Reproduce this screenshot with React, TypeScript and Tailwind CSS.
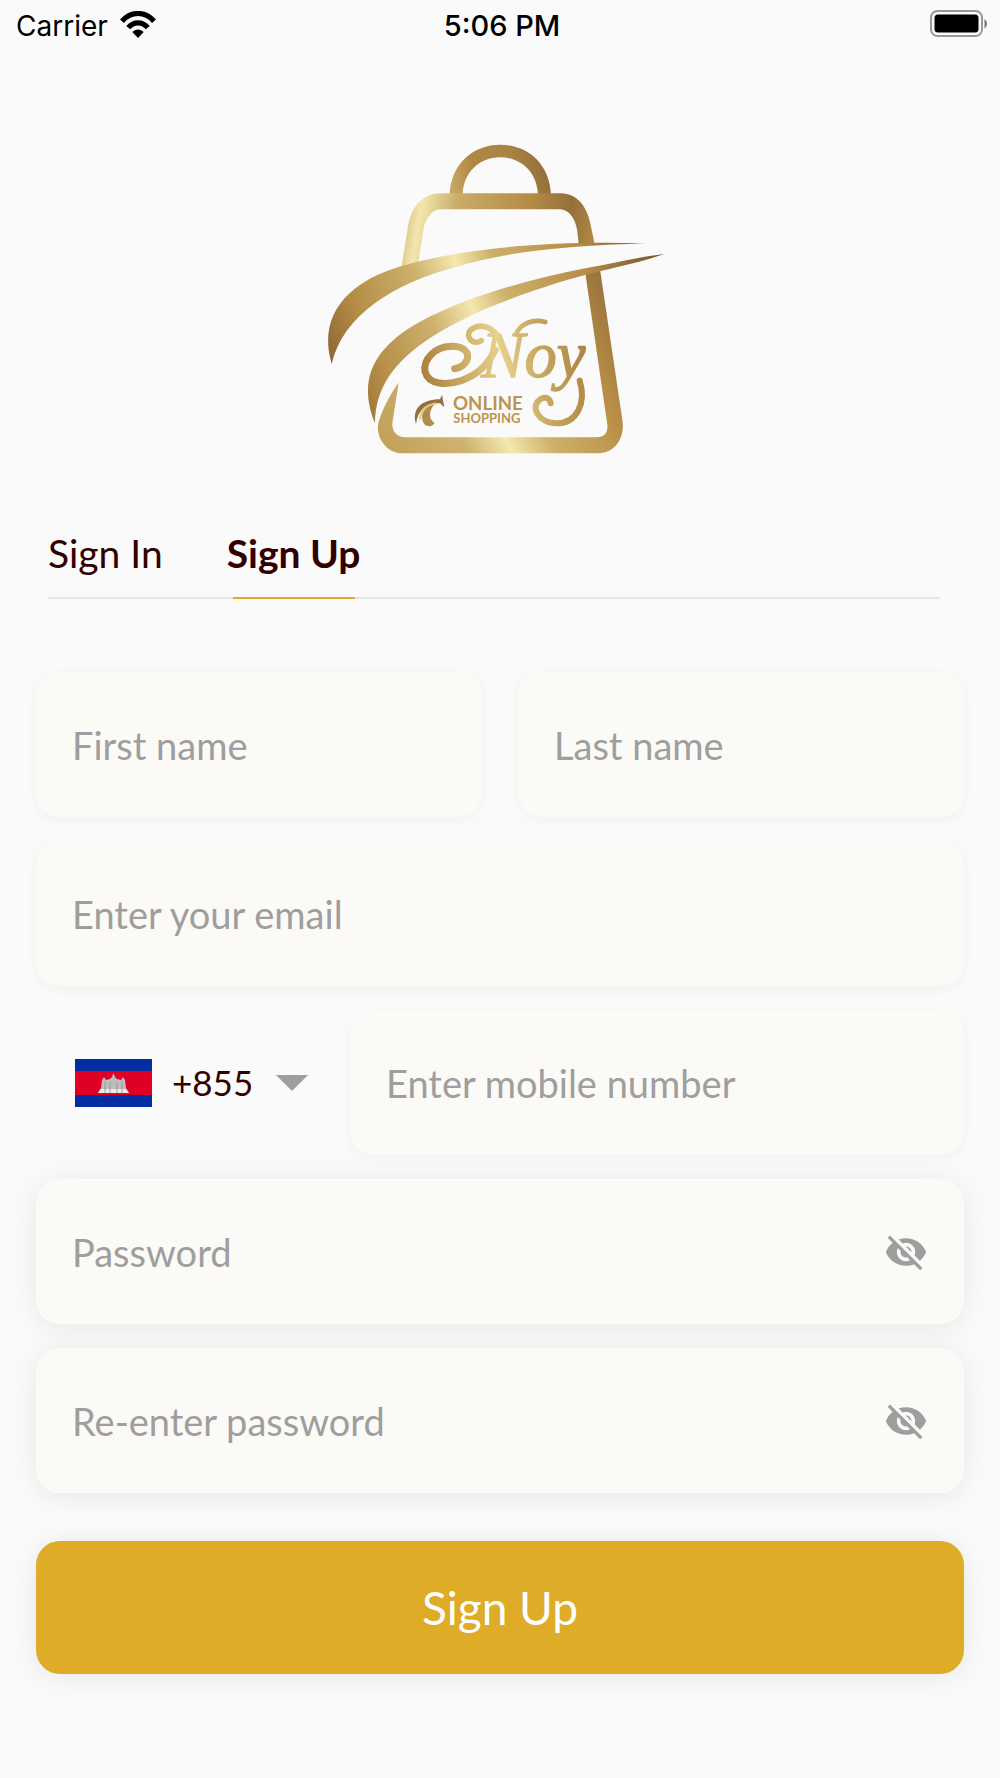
import { useState } from "react";
import { MdVisibility, MdVisibilityOff } from "react-icons/md";

type Tab = "signin" | "signup";

const tabs: { value: Tab; label: string }[] = [
  { value: "signin", label: "Sign In" },
  { value: "signup", label: "Sign Up" },
];

const dialCodes = ["+855", "+66", "+84", "+65"];

function StatusBar() {
  return (
    <header className="grid h-[52px] grid-cols-3 items-center pr-3 pl-4 font-['Inter',sans-serif] text-[28px] text-black">
      <div className="flex items-center gap-3">
        <span>Carrier</span>
        <svg viewBox="0 0 36 27" className="mb-1 h-[27px] w-9" aria-hidden="true">
          <g fill="none" stroke="#000" strokeWidth="5.2">
            <path d="M2 10.2C11-.1 25-.1 34 10.2" />
            <path d="M8.2 16.6c5.5-6.4 14.100-6.400 19.600 0" />
          </g>
          <path d="M12.300 21c3.200-3.400 8.200-3.400 11.400 0L18 27z" />
        </svg>
      </div>
      <span className="text-center text-[29px] font-medium">5:06 PM</span>
      <svg viewBox="0 0 58 28" className="mb-1 h-7 w-[58px] justify-self-end" aria-hidden="true">
        <rect x="1" y="1" width="51" height="25" rx="6.500" fill="none" stroke="#999" strokeWidth="2" />
        <rect x="4.500" y="4.500" width="44" height="18" rx="3.500" />
        <path d="M54.500 9c3.200 2 3.200 7.500 0 9.500z" fill="#777" />
      </svg>
    </header>
  );
}

function Logo() {
  return (
    <svg viewBox="0 0 1110 1020" className="h-[340px] w-[370px]" role="img" aria-label="Noy Online Shopping">
      <defs>
        <linearGradient id="handle" gradientUnits="userSpaceOnUse" x1="420" y1="190" x2="722" y2="90">
          <stop offset="0" stopColor="#c9ab66" />
          <stop offset=".3" stopColor="#b08742" />
          <stop offset=".65" stopColor="#a98447" />
          <stop offset="1" stopColor="#8e6a33" />
        </linearGradient>
        <linearGradient id="bagTop" gradientUnits="userSpaceOnUse" x1="240" y1="300" x2="850" y2="400">
          <stop offset="0" stopColor="#c3a25a" />
          <stop offset=".13" stopColor="#f3e7ae" />
          <stop offset=".3" stopColor="#c9ac68" />
          <stop offset=".65" stopColor="#b58b45" />
          <stop offset=".85" stopColor="#94713a" />
          <stop offset="1" stopColor="#b58c46" />
        </linearGradient>
        <linearGradient id="swoosh" gradientUnits="userSpaceOnUse" x1="50" y1="650" x2="990" y2="310">
          <stop offset="0" stopColor="#8f6a35" />
          <stop offset=".12" stopColor="#b58c46" />
          <stop offset=".32" stopColor="#ccb06c" />
          <stop offset=".45" stopColor="#f4e8b0" />
          <stop offset=".56" stopColor="#cdb06a" />
          <stop offset=".8" stopColor="#b88e48" />
          <stop offset="1" stopColor="#80602f" />
        </linearGradient>
        <linearGradient id="bagBase" gradientUnits="userSpaceOnUse" x1="190" y1="860" x2="920" y2="480">
          <stop offset="0" stopColor="#c3a25a" />
          <stop offset=".25" stopColor="#cfb370" />
          <stop offset=".39" stopColor="#f4e8b0" />
          <stop offset=".53" stopColor="#ceb16b" />
          <stop offset=".78" stopColor="#b98f48" />
          <stop offset="1" stopColor="#94703a" />
        </linearGradient>
        <linearGradient id="script" gradientUnits="userSpaceOnUse" x1="330" y1="740" x2="840" y2="640">
          <stop offset="0" stopColor="#a87d3b" />
          <stop offset=".28" stopColor="#cdb069" />
          <stop offset=".48" stopColor="#e6d28c" />
          <stop offset=".7" stopColor="#c6a660" />
          <stop offset="1" stopColor="#aa803d" />
        </linearGradient>
      </defs>

      <path d="M419 194C423 100 490 44 571 44s148 56 152 150h-39C682 128 634 82 571 82s-111 46-113 112z" fill="url(#handle)" />
      <path
        d="M274 412L294 290C304 228 340 190 392 190H752C806 190 832 238 840 276L854 342H806L802 304C797 266 776 238 750 238H388C366 238 346 270 341 294L325 396Z"
        fill="url(#bagTop)"
      />
      <path
        d="M826 430L870 418L938 876C943 930 912 970 862 970H280C232 970 200 928 204 884C210 854 238 794 266 758L247 880C246 906 262 922 286 922H860C884 922 894 908 892 884Z"
        fill="url(#bagBase)"
      />
      <path
        d="M65 702C20 550 122 452 275 408C460 355 700 332 1005 340C790 348 600 360 430 413C250 462 98 556 65 702Z"
        fill="url(#swoosh)"
      />
      <path
        d="M195 880C140 745 195 650 330 575C490 492 660 448 830 414C920 398 990 380 1063 372C960 408 850 424 740 459C600 505 480 548 365 621C250 695 196 775 195 880Z"
        fill="url(#swoosh)"
      />

      {/* flourishes around the wordmark */}
      <g fill="none" stroke="url(#script)" strokeLinecap="round">
        <path d="M434 716C482 708 492 652 430 649C372 648 340 690 345 724C356 766 410 766 454 752C510 732 534 700 556 660" strokeWidth="21" />
        <path d="M514 632C488 648 464 618 482 600C508 578 546 588 568 626" strokeWidth="17" />
        <path d="M618 612C634 578 670 566 706 576" strokeWidth="14" />
        <path d="M809 752C830 820 800 880 740 880C684 880 656 826 694 806C710 798 720 808 722 820" strokeWidth="18" />
      </g>
      <text
        x="514"
        y="740"
        fill="url(#script)"
        stroke="url(#script)"
        strokeWidth="4"
        className="font-['Liberation_Serif',serif] text-[194px] italic"
      >
        Noy
      </text>

      {/* small emblem left of the tagline */}
      <path d="M318 882C304 836 336 808 390 808L396 794L403 832L390 820C350 818 324 838 318 882Z" fill="#94703a" />
      <path d="M346 886C326 862 338 832 376 820C356 842 354 866 374 880C366 890 356 890 346 886Z" fill="#b38c48" />
      <path d="M330 868C332 838 350 824 380 820" fill="none" stroke="#dcc68a" strokeWidth="6" />
      <g fill="#ba9450" className="font-['Lato',sans-serif]">
        <text x="429" y="840" className="text-[56px] font-bold">
          ONLINE
        </text>
        <text x="430" y="880" className="text-[39px] font-bold">
          SHOPPING
        </text>
      </g>
    </svg>
  );
}

function CambodiaFlag() {
  return (
    <svg viewBox="0 0 77 48" className="h-12 w-[77px] shrink-0" role="img" aria-label="Cambodia">
      <path d="M0 0h77v48H0z" fill="#032ea1" />
      <path d="M0 12h77v24H0z" fill="#e00025" />
      <path
        d="M23 34l3-5 1-8 2-3 2 3 4-1 2-2 1.500-4 1.500 4 2 2 4 1 2-3 2 3 1 8 3 5z"
        fill="#bdbdbd"
      />
      <path d="M23 34l3-4h25l3 4z" fill="#ececec" />
      <path d="M30 22v12M35 23v11M42 23v11M47 22v12" stroke="#8f8f8f" strokeWidth=".8" />
    </svg>
  );
}

interface FieldProps {
  id: string;
  label: string;
  type?: string;
}

function Field({ id, label, type = "text" }: FieldProps) {
  return (
    <input
      id={id}
      type={type}
      aria-label={label}
      placeholder={label}
      className="h-[145px] w-full min-w-0 flex-1 rounded-3xl bg-[#fbfaf6] px-9 text-[38px] text-[#330000] shadow-[0_3px_14px_rgba(0,0,0,0.04)] outline-none placeholder:text-[#9e9e9e]"
    />
  );
}

function PasswordField({ id, label }: FieldProps) {
  const [visible, setVisible] = useState(false);
  const Icon = visible ? MdVisibility : MdVisibilityOff;

  return (
    <div className="flex h-[145px] items-center rounded-3xl bg-[#fbfaf6] pr-9 shadow-[0_3px_28px_rgba(0,0,0,0.08)]">
      <input
        id={id}
        type={visible ? "text" : "password"}
        aria-label={label}
        placeholder={label}
        className="h-full min-w-0 flex-1 bg-transparent pl-9 text-[38px] text-[#330000] outline-none placeholder:text-[#9e9e9e]"
      />
      <button
        type="button"
        aria-label={visible ? "Hide password" : "Show password"}
        onClick={() => setVisible(!visible)}
        className="text-[#9e9e9e]"
      >
        <Icon className="size-11" />
      </button>
    </div>
  );
}

export default function App() {
  const [tab, setTab] = useState<Tab>("signup");
  const [dialCode, setDialCode] = useState("+855");

  return (
    <div className="min-h-screen bg-[#fafafa] font-['Lato',sans-serif] text-[#330000]">
      <StatusBar />
      <main className="px-9">
        <div className="flex justify-center pt-[78px] pr-2.5">
          <Logo />
        </div>

        <div role="tablist" className="mr-6 ml-3 flex gap-16 border-b-2 border-[#e5e5e5] pt-14">
          {tabs.map((item) => (
            <button
              key={item.value}
              type="button"
              role="tab"
              aria-selected={tab === item.value}
              onClick={() => setTab(item.value)}
              className={`relative pb-4 text-[39px] leading-[55px] ${
                tab === item.value ? "font-bold" : ""
              }`}
            >
              {item.label}
              {tab === item.value ? (
                <span className="absolute inset-x-1.5 -bottom-0.5 h-0.5 bg-[#dead27]" />
              ) : null}
            </button>
          ))}
        </div>

        <form className="mt-[73px] flex flex-col gap-6" onSubmit={(event) => event.preventDefault()}>
          <div className="flex gap-9">
            <Field id="first-name" label="First name" />
            <Field id="last-name" label="Last name" />
          </div>
          <div className="flex">
            <Field id="email" label="Enter your email" type="email" />
          </div>
          <div className="flex items-center">
            <div className="flex w-[314px] items-center pl-[39px]">
              <CambodiaFlag />
              <div className="relative ml-5">
                <select
                  id="dial-code"
                  aria-label="Country code"
                  value={dialCode}
                  onChange={(event) => setDialCode(event.target.value)}
                  className="w-[136px] appearance-none bg-transparent text-[35px] outline-none"
                >
                  {dialCodes.map((code) => (
                    <option key={code}>{code}</option>
                  ))}
                </select>
                <svg
                  viewBox="0 0 32 16"
                  className="pointer-events-none absolute top-1/2 right-0 h-4 w-8 -translate-y-1/2"
                  aria-hidden="true"
                >
                  <path d="M0 0h32L16 16z" fill="#9e9e9e" />
                </svg>
              </div>
            </div>
            <Field id="mobile" label="Enter mobile number" type="tel" />
          </div>
          <PasswordField id="password" label="Password" />
          <PasswordField id="confirm-password" label="Re-enter password" />
          <button
            type="submit"
            className="mt-6 h-[133px] rounded-3xl bg-[#deac27] text-[46px] text-white shadow-[0_3px_28px_rgba(0,0,0,0.08)]"
          >
            Sign Up
          </button>
        </form>
      </main>
    </div>
  );
}
